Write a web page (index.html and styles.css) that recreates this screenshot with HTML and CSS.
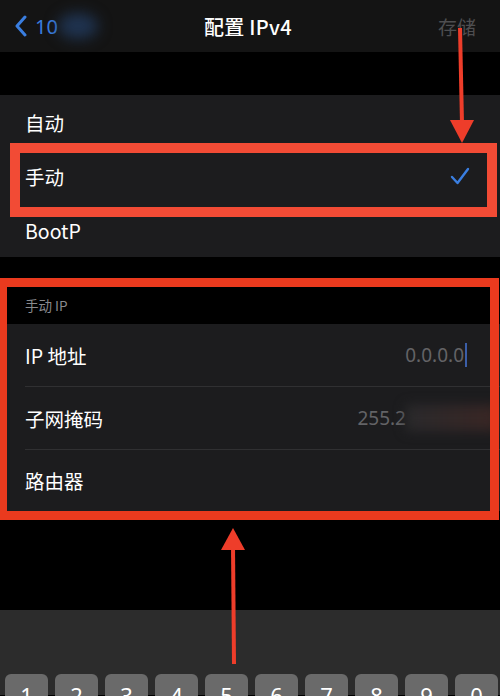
FILE: index.html
```html
<!DOCTYPE html>
<html lang="zh-CN">
<head>
  <meta charset="UTF-8">
  <meta name="viewport" content="width=device-width, initial-scale=1.0">
  <title>配置 IPv4</title>
  <link rel="stylesheet" href="styles.css">
</head>
<body>
  <div class="screen">
    <!-- Navigation bar -->
    <header class="nav">
      <div class="nav-back">
        <svg class="chevron" width="14" height="22" viewBox="0 0 14 22">
          <path d="M11 2 L3 11 L11 20" fill="none" stroke="#3a7ee0" stroke-width="3" stroke-linecap="round" stroke-linejoin="round"/>
        </svg>
        <span class="back-label">10</span>
        <span class="blur-blob"></span>
      </div>
      <h1 class="nav-title">配置 IPv4</h1>
      <span class="nav-save">存储</span>
    </header>

    <div class="spacer-top"></div>

    <!-- Mode choice -->
    <ul class="group">
      <li class="row">自动</li>
      <li class="row">手动
        <svg class="check" width="20" height="18" viewBox="0 0 20 18">
          <path d="M2 10 L7.5 16 L18 2" fill="none" stroke="#3a7ee0" stroke-width="2.4" stroke-linecap="round" stroke-linejoin="round"/>
        </svg>
      </li>
      <li class="row">BootP</li>
    </ul>

    <div class="spacer-mid"></div>

    <!-- Manual IP -->
    <div class="section-head">手动 IP</div>
    <ul class="group group-ip">
      <li class="row row-tall">IP 地址<span class="value">0.0.0.0<i class="caret"></i></span></li>
      <li class="row row-tall">子网掩码<span class="value">255.2<span class="blur-val"></span></span></li>
      <li class="row row-tall">路由器</li>
    </ul>

    <div class="spacer-bottom"></div>

    <!-- Number keyboard -->
    <div class="keyboard">
      <div class="keys">
        <span class="key">1</span>
        <span class="key">2</span>
        <span class="key">3</span>
        <span class="key">4</span>
        <span class="key">5</span>
        <span class="key">6</span>
        <span class="key">7</span>
        <span class="key">8</span>
        <span class="key">9</span>
        <span class="key">0</span>
      </div>
    </div>

    <!-- Annotations -->
    <div class="mark mark-mode"></div>
    <div class="mark mark-ip"></div>
    <svg class="arrows" width="500" height="696" viewBox="0 0 500 696">
      <line x1="460" y1="28" x2="462" y2="124" stroke="#ee3d2a" stroke-width="4"/>
      <polygon points="450,120 474,120 462,143" fill="#ee3d2a"/>
      <line x1="234" y1="664" x2="233" y2="546" stroke="#ee3d2a" stroke-width="4"/>
      <polygon points="221,550 245,550 233,528" fill="#ee3d2a"/>
    </svg>
  </div>
</body>
</html>
```

FILE: styles.css
```css
* {
  box-sizing: border-box;
}
body {
  margin: 0;
  background: #000;
  font-family: "Noto Sans CJK SC", "Noto Sans", sans-serif;
  color: #fff;
}
.screen {
  position: relative;
  width: 500px;
  height: 696px;
  overflow: hidden;
  background: #000;
}
.nav {
  height: 52px;
  background: #141414;
  display: flex;
  align-items: center;
  justify-content: space-between;
  padding: 0 24px 0 14px;
}
.nav-back {
  display: flex;
  align-items: center;
  gap: 7px;
  width: 90px;
  position: relative;
}
.back-label {
  color: #3a7ee0;
  font-size: 20px;
  font-family: "Noto Sans", sans-serif;
}
.blur-blob {
  position: absolute;
  left: 44px;
  top: 0;
  width: 40px;
  height: 26px;
  border-radius: 50%;
  background: #1f3350;
  filter: blur(7px);
}
.nav-title {
  margin: 0 0 0 6px;
  font-size: 20px;
  font-weight: 500;
  letter-spacing: 0.3px;
}
.nav-save {
  width: 90px;
  text-align: right;
  color: #4e4e50;
  font-size: 19px;
}
.spacer-top {
  height: 43px;
}
.group {
  list-style: none;
  margin: 0;
  padding: 0 0 0 25px;
  background: #1c1c1e;
}
.row {
  height: 54px;
  display: flex;
  align-items: center;
  justify-content: space-between;
  padding-right: 30px;
  font-size: 19.5px;
}
.spacer-mid {
  height: 29px;
}
.section-head {
  height: 38px;
  padding: 9px 0 0 25px;
  font-size: 13.5px;
  color: #8a8a8e;
}
.row-tall {
  height: 63px;
  border-bottom: 1px solid #303032;
}
.row-tall:last-child {
  height: 61px;
  border-bottom: none;
}
.value {
  display: flex;
  align-items: center;
  color: #636366;
  font-size: 19px;
  font-family: "Noto Sans", sans-serif;
  margin-right: 3px;
}
.caret {
  width: 2px;
  height: 24px;
  background: #3b5ea8;
  margin-left: 1px;
}
.blur-val {
  width: 91px;
  height: 26px;
  background: linear-gradient(90deg, #2a2a2c, #3a2624);
  filter: blur(6px);
  margin-right: -30px;
}
.spacer-bottom {
  height: 99px;
}
.keyboard {
  height: 85px;
  background: #2c2c2c;
  padding: 64px 0 0 5px;
}
.keys {
  display: flex;
  gap: 7px;
}
.key {
  width: 43px;
  height: 40px;
  border-radius: 6px;
  background: #6a6a6a;
  color: #fff;
  font-size: 22px;
  font-family: "Noto Sans", sans-serif;
  text-align: center;
  padding-top: 6px;
  flex: none;
}
.mark {
  position: absolute;
  border-style: solid;
}
.mark-mode {
  left: 10px;
  top: 143px;
  width: 487px;
  height: 74px;
  border-width: 10px;
  border-color: #f24b35;
}
.mark-ip {
  left: -2px;
  top: 278px;
  width: 501px;
  height: 242px;
  border-width: 9px;
  border-color: #ea3a1e;
}
.arrows {
  position: absolute;
  left: 0;
  top: 0;
}
```
